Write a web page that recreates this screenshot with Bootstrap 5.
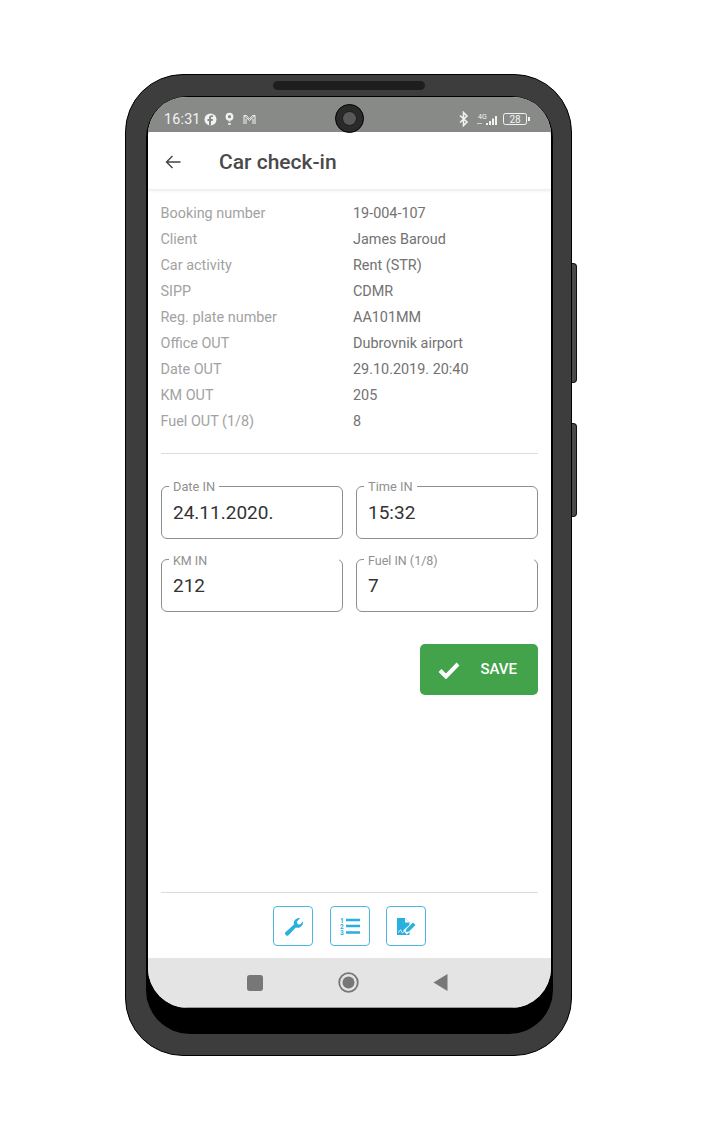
<!DOCTYPE html>
<html lang="en">
<head>
    <meta charset="UTF-8">
    <meta name="viewport" content="width=device-width, initial-scale=1.0">
    <title>Car check-in</title>
    <link href="https://cdn.jsdelivr.net/npm/bootstrap@5.3.3/dist/css/bootstrap.min.css" rel="stylesheet">
    <style>
        body { background: #fff; font-family: Roboto, "Liberation Sans", sans-serif; }
        .phone-body { position: relative; width: 447px; height: 982px; margin: 74px 0 0 125px; padding: 21px 18px 0 20px; background: #3d3d3e; border: 1px solid #000; border-radius: 58px; }
        .side-key { position: absolute; left: 446px; width: 5px; background: #4a4a4b; border: 1px solid #111; border-left: 0; border-radius: 0 4px 4px 0; }
        .key-top { top: 188px; height: 120px; }
        .key-bottom { top: 348px; height: 94px; }
        .speaker { position: absolute; top: 6px; left: 147px; width: 152px; height: 9px; background: #1e1e1e; border-radius: 5px; }
        .bezel { height: 938px; padding: 1px 2px 0 2px; background: #000; border-radius: 42px 42px 44px 44px; }
        .screen { height: 911px; background: #fff; border-radius: 38px 38px 40px 40px; overflow: hidden; }
        .status-strip { height: 35px; padding: 9px 21px 0 16px; background: #888a88; color: #f2f2f2; font-size: 14.3px; }
        .status-time { margin: 2px 3px 0 0; letter-spacing: .2px; }
        .cam { position: absolute; top: 29px; left: 209px; width: 29px; height: 29px; background: #2a2a2a; border: 1px solid #000; border-radius: 50%; }
        .cam::after { content: ""; position: absolute; top: 6px; left: 6px; width: 15px; height: 15px; background: #585858; border: 1px solid #1a1a1a; border-radius: 50%; }
        .app-bar { height: 58px; padding: 2px 0 0 17px; border-bottom: 1px solid #eee; box-shadow: 0 1px 3px rgba(0, 0, 0, .08); }
        .app-title { margin: 2px 0 0 38px; font-size: 21px; font-weight: 500; color: #4a4a4a; }
        .page-body { height: 768px; padding: 0 13px; }
        .info-list { margin-left: -.5px; padding-top: 14px; font-size: 14.4px; line-height: 20px; }
        .info-row { height: 26px; }
        .info-key { width: 192.5px; color: #a2a2a2; }
        .info-val { color: #727272; }
        .rule { height: 1px; background: #dcdcdc; }
        .field { position: relative; width: 182px; height: 53px; padding: 11px 11px 0; font-size: 19px; line-height: 30px; color: #333; border: 1px solid #8e8e8e; border-radius: 6px; }
        .field-tag { position: absolute; top: -8px; left: 7px; padding: 0 4px; background: #fff; font-size: 12.8px; line-height: 16px; color: #909090; }
        .field-wide .field-tag { right: 3px; top: -6px; font-size: 12.5px; line-height: 13px; }
        .save-btn { width: 118px; height: 51px; padding: 0 21px 0 18px; background: #43a34b; border: 0; border-radius: 5px; color: #fff; font-size: 15px; font-weight: 500; }
        .save-btn:hover { background: #43a34b; color: #fff; }
        .tool-btn { width: 40px; height: 40px; padding: 0; background: #fff; border: 1.5px solid #4ab8dc; border-radius: 4px; }
        .nav-strip { height: 50px; padding: 0 0 0 99px; background: #e4e4e4; border-bottom: 1px solid #999; }
    </style>
</head>

<body>
    <div class="phone-body">
        <div class="side-key key-top"></div>
        <div class="side-key key-bottom"></div>
        <div class="speaker"></div>
        <div class="cam"></div>
        <div class="bezel">
            <div class="screen d-flex flex-column">
                <div class="status-strip d-flex align-items-center justify-content-between">
                    <div class="d-flex align-items-center">
                        <span class="status-time">16:31</span>
                        <svg width="13" height="13" viewBox="0 0 13 13"><circle cx="6.500" cy="6.500" r="6" fill="#f2f2f2"/><path d="M7 12.500V8h1.700l.3-2H7V5c0-.6.3-1 1-1h1V2.300H7.700C6 2.300 5 3.300 5 4.800V6H3.500v2H5v4.500z" fill="#888a88"/></svg>
                        <svg style="margin-left:7px" width="11" height="14" viewBox="0 0 12 14"><circle cx="6" cy="4.500" r="3" fill="none" stroke="#f2f2f2" stroke-width="2.500"/><path d="M4.500 8.500h3L6 10.500z" fill="#f2f2f2"/><rect x="4.500" y="11.500" width="3" height="1.800" fill="#f2f2f2"/></svg>
                        <svg style="margin-left:8px" width="13" height="11" viewBox="0 0 13 11"><path d="M1 10V1.500l5.500 5 5.500-5V10M1 1.500h2.500L6.500 5 9.500 1.500H12M3 10V5M10 10V5" fill="none" stroke="#f2f2f2" stroke-width="1"/></svg>
                    </div>
                    <div class="d-flex align-items-center">
                        <svg width="10" height="16" viewBox="0 0 10 16"><path d="M1 4.500l7 6.500-3.500 3.500V1.500L8 5l-7 6.500" fill="none" stroke="#f2f2f2" stroke-width="1.600"/></svg>
                        <svg class="ms-2" width="20" height="13" viewBox="0 0 20 13"><text x="1" y="6" font-size="7" fill="#f2f2f2" font-family="Roboto, sans-serif">4G</text><rect x="0" y="10" width="5" height="1" fill="#d0d0d0"/><rect x="9" y="10" width="2" height="2" fill="#f2f2f2"/><rect x="12" y="8" width="2" height="4" fill="#f2f2f2"/><rect x="15" y="5.500" width="2" height="6.500" fill="#f2f2f2"/><rect x="18" y="3" width="2" height="9" fill="#f2f2f2"/></svg>
                        <svg style="margin-left:6px" width="27" height="12" viewBox="0 0 27 12"><rect x=".5" y=".5" width="23" height="11" rx="2" fill="none" stroke="#f2f2f2"/><text x="12" y="9.500" text-anchor="middle" font-size="10" fill="#f2f2f2" font-family="Roboto, sans-serif">28</text><rect x="25" y="4" width="2" height="4" fill="#f2f2f2"/></svg>
                    </div>
                </div>

                <div class="app-bar d-flex align-items-center">
                    <svg width="16" height="14" viewBox="0 0 16 14"><path d="M15.500 7H1.500M7.500 1l-6 6 6 6" fill="none" stroke="#444" stroke-width="1.400"/></svg>
                    <h1 class="app-title">Car check-in</h1>
                </div>

                <div class="page-body d-flex flex-column">
                    <div class="info-list" id="info-list"></div>
                    <div class="rule" style="margin-top:15px"></div>

                    <div class="d-flex justify-content-between" style="margin-top:32px">
                        <div class="field"><span class="field-tag">Date IN</span>24.11.2020.</div>
                        <div class="field"><span class="field-tag">Time IN</span>15:32</div>
                    </div>
                    <div class="d-flex justify-content-between" style="margin-top:20px">
                        <div class="field field-wide"><span class="field-tag">KM IN</span>212</div>
                        <div class="field field-wide"><span class="field-tag">Fuel IN (1/8)</span>7</div>
                    </div>

                    <div class="d-flex justify-content-end" style="margin-top:32px">
                        <button type="button" class="btn save-btn d-flex align-items-center justify-content-between">
                            <svg width="22" height="18" viewBox="0 0 22 18"><path d="M2 9.500l6 6L20 3" fill="none" stroke="#fff" stroke-width="4"/></svg>
                            <span>SAVE</span>
                        </button>
                    </div>

                    <div class="rule mt-auto" style="margin-bottom:13px"></div>
                    <div class="d-flex justify-content-center" style="gap:16.5px;margin-bottom:12px">
                        <button type="button" class="btn tool-btn d-flex align-items-center justify-content-center">
                            <svg width="19" height="19" viewBox="0 0 20 20"><path d="M1.500 16L10.500 8C9.500 4 12.500 .5 17 1L13.500 5l1 2.500 2.500.5L20 4.500c.5 4.500-3.500 8-7.500 6.500L4.500 19.500C2.500 20.500 0 18 1.500 16z" fill="#29b0de"/></svg>
                        </button>
                        <button type="button" class="btn tool-btn d-flex align-items-center justify-content-center">
                            <svg width="20" height="18" viewBox="0 0 20 18">
                                <path d="M6 3h14M6 9h14M6 15.500h14" stroke="#29b0de" stroke-width="2.700"/>
                                <text x="0" y="5.500" font-size="6.500" font-weight="700" fill="#29b0de" font-family="Roboto, sans-serif">1</text>
                                <text x="0" y="11.500" font-size="6.500" font-weight="700" fill="#29b0de" font-family="Roboto, sans-serif">2</text>
                                <text x="0" y="17.500" font-size="6.500" font-weight="700" fill="#29b0de" font-family="Roboto, sans-serif">3</text>
                            </svg>
                        </button>
                        <button type="button" class="btn tool-btn d-flex align-items-center justify-content-center">
                            <svg width="20" height="19" viewBox="0 0 20 19">
                                <path d="M1 1h8l4.500 4.500V18H1z" fill="#29b0de"/>
                                <path d="M9 1v4.500h4.500z" fill="#fff"/>
                                <path d="M2.500 15.500c1.500-3 2.500-3 3-1s1.500 1.500 3-.5" fill="none" stroke="#fff"/>
                                <path d="M9 15.500l10-9" stroke="#fff" stroke-width="5.500"/>
                                <path d="M9.500 15l1-3 6.500-6.500 2.500 2.500-6.500 6.500z" fill="#29b0de"/>
                            </svg>
                        </button>
                    </div>
                </div>

                <div class="nav-strip d-flex align-items-center">
                    <svg width="16" height="16" viewBox="0 0 15 15"><rect width="15" height="15" rx="2.500" fill="#777"/></svg>
                    <svg style="margin-left:75px" width="21" height="21" viewBox="0 0 21 21"><circle cx="10.500" cy="10.500" r="9.300" fill="none" stroke="#777" stroke-width="1.800"/><circle cx="10.500" cy="10.500" r="6" fill="#777"/></svg>
                    <svg style="margin-left:74px" width="15" height="17" viewBox="0 0 14 17"><path d="M14 0v17L0 8.500z" fill="#777"/></svg>
                </div>
            </div>
        </div>
    </div>

    <script>
        const infoRows = [
            ["Booking number", "19-004-107"],
            ["Client", "James Baroud"],
            ["Car activity", "Rent (STR)"],
            ["SIPP", "CDMR"],
            ["Reg. plate number", "AA101MM"],
            ["Office OUT", "Dubrovnik airport"],
            ["Date OUT", "29.10.2019. 20:40"],
            ["KM OUT", "205"],
            ["Fuel OUT (1/8)", "8"]
        ];
        document.getElementById("info-list").innerHTML = infoRows.map(r =>
            `<div class="info-row d-flex"><div class="info-key">${r[0]}</div><div class="info-val">${r[1]}</div></div>`
        ).join("");
    </script>
    <script src="https://cdn.jsdelivr.net/npm/bootstrap@5.3.3/dist/js/bootstrap.bundle.min.js"></script>
</body>
</html>
